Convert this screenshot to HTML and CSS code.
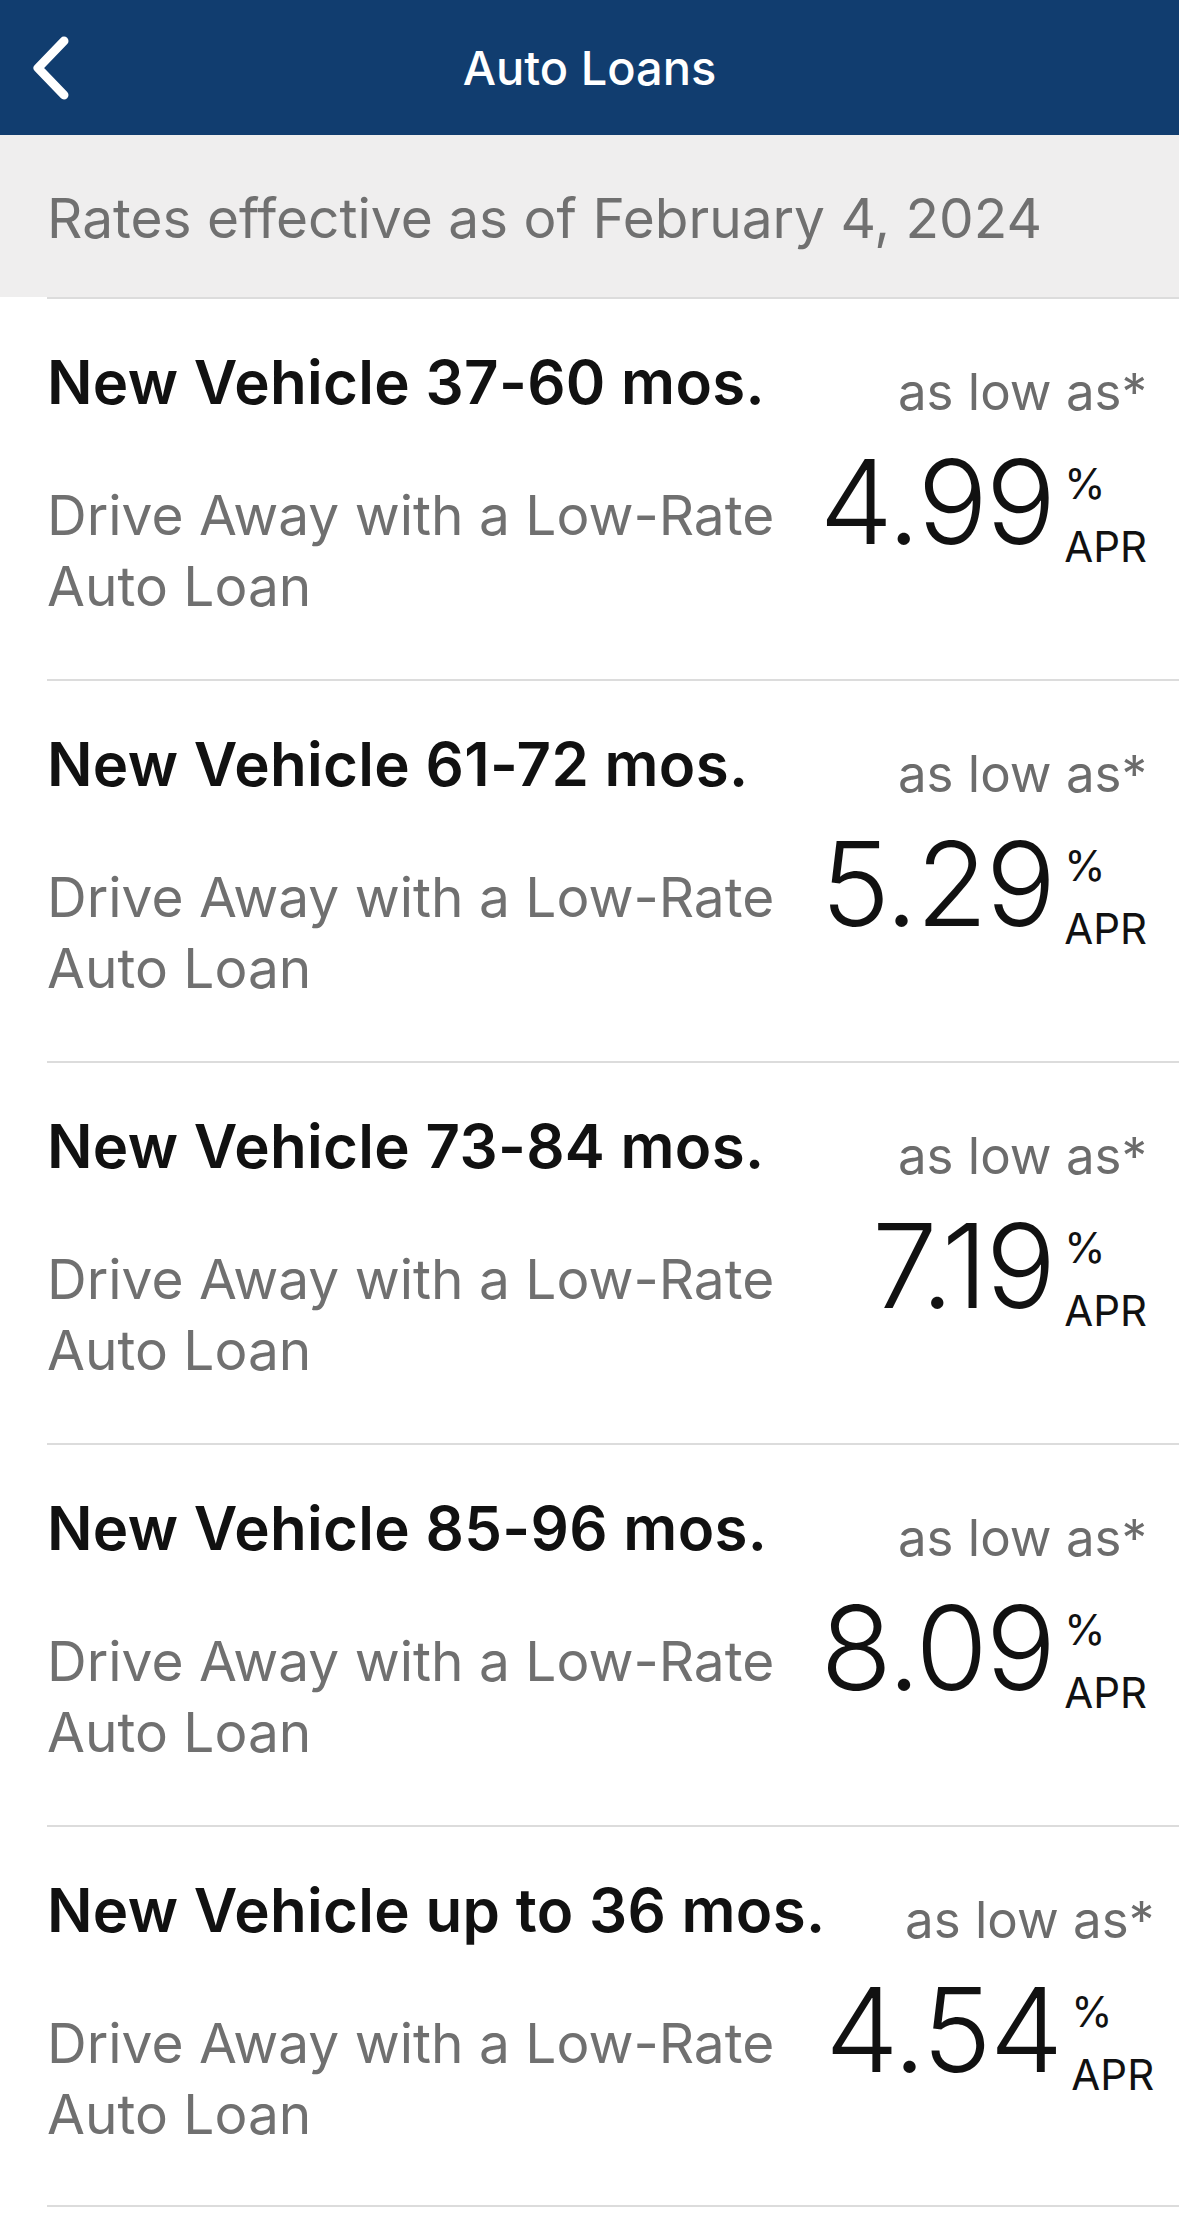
FILE: index.html
```html
<!DOCTYPE html>
<html>
  <head>
    <meta charset="utf-8" />
    <title>Auto Loans</title>
    <meta name="viewport" content="width=device-width, initial-scale=1" />
    <link rel="stylesheet" href="styles.css">
  </head>
  <body>
    <header class="nav-bar">
      <a class="back" href="#" aria-label="Back">
        <svg viewBox="0 0 40 64" width="40" height="64">
          <path d="M32 5 L6 32 L32 59" fill="none" stroke="#fff" stroke-width="9" stroke-linecap="round" stroke-linejoin="round" />
        </svg>
      </a>
      <h1>Auto Loans</h1>
    </header>
    <div class="effective">Rates effective as of February 4, 2024</div>
    <main class="rates">
      <section class="rate-row">
        <div class="info">
          <h2>New Vehicle 37-60 mos.</h2>
          <p>Drive Away with a Low-Rate Auto Loan</p>
        </div>
        <div class="rate">
          <span class="low">as low as*</span>
          <div class="value">
            <span class="num">4.99</span>
            <span class="unit"><span>%</span><span>APR</span></span>
          </div>
        </div>
      </section>
      <section class="rate-row">
        <div class="info">
          <h2>New Vehicle 61-72 mos.</h2>
          <p>Drive Away with a Low-Rate Auto Loan</p>
        </div>
        <div class="rate">
          <span class="low">as low as*</span>
          <div class="value">
            <span class="num">5.29</span>
            <span class="unit"><span>%</span><span>APR</span></span>
          </div>
        </div>
      </section>
      <section class="rate-row">
        <div class="info">
          <h2>New Vehicle 73-84 mos.</h2>
          <p>Drive Away with a Low-Rate Auto Loan</p>
        </div>
        <div class="rate">
          <span class="low">as low as*</span>
          <div class="value">
            <span class="num">7.19</span>
            <span class="unit"><span>%</span><span>APR</span></span>
          </div>
        </div>
      </section>
      <section class="rate-row">
        <div class="info">
          <h2>New Vehicle 85-96 mos.</h2>
          <p>Drive Away with a Low-Rate Auto Loan</p>
        </div>
        <div class="rate">
          <span class="low">as low as*</span>
          <div class="value">
            <span class="num">8.09</span>
            <span class="unit"><span>%</span><span>APR</span></span>
          </div>
        </div>
      </section>
      <section class="rate-row">
        <div class="info">
          <h2>New Vehicle up to 36 mos.</h2>
          <p>Drive Away with a Low-Rate Auto Loan</p>
        </div>
        <div class="rate">
          <span class="low">as low as*</span>
          <div class="value">
            <span class="num">4.54</span>
            <span class="unit"><span>%</span><span>APR</span></span>
          </div>
        </div>
      </section>
    </main>
  </body>
</html>
```

FILE: styles.css
```css
* {
  box-sizing: border-box;
}
body {
  margin: 0;
  background-color: #fff;
  font-family: "Inter", "Roboto", sans-serif;
  color: #111;
}
.nav-bar {
  height: 135px;
  background-color: #113d6f;
  display: flex;
  align-items: center;
  justify-content: center;
  position: relative;
}
.nav-bar h1 {
  margin: 0;
  color: #fff;
  font-size: 47px;
  font-weight: 500;
}
.back {
  position: absolute;
  left: 32px;
  top: 36px;
  display: block;
  width: 40px;
  height: 64px;
}
.effective {
  height: 162px;
  background-color: #efeeee;
  color: #707070;
  font-size: 55px;
  padding: 50px 0 0 47px;
  line-height: 66px;
}
.rates {
  margin-left: 47px;
}
.rate-row {
  height: 382px;
  border-top: 2px solid #dcdcdc;
  display: flex;
  justify-content: space-between;
  padding: 47px 32px 0 0;
}
.rate-row:last-child {
  border-bottom: 2px solid #dcdcdc;
}
.info h2 {
  margin: 0;
  font-size: 60px;
  line-height: 72px;
  font-weight: 560;
  letter-spacing: 0.3px;
  white-space: nowrap;
}
.info p {
  margin: 62px 0 0;
  width: 730px;
  font-size: 55px;
  line-height: 71px;
  color: #707070;
}
.rate {
  display: flex;
  flex-direction: column;
  align-items: flex-end;
}
.low {
  font-size: 51px;
  line-height: 64px;
  color: #6c6c6c;
  margin-top: 14px;
}
.value {
  display: flex;
  margin-top: 20px;
}
.num {
  font-size: 117px;
  line-height: 116px;
  font-weight: 300;
  letter-spacing: -2px;
}
.unit {
  display: flex;
  flex-direction: column;
  font-size: 42px;
  line-height: 63px;
  margin-left: 10px;
  padding-top: 8px;
}
```
